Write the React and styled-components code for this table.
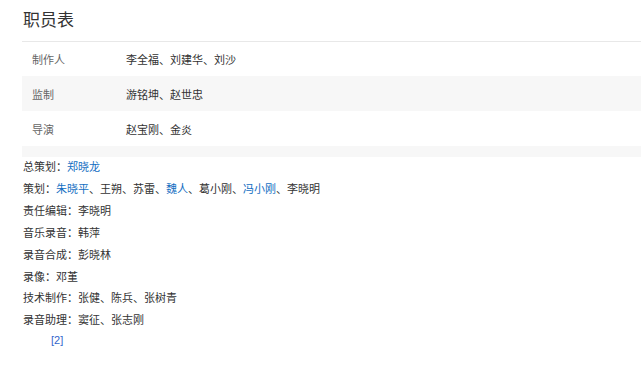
import React from "react";
import styled, { createGlobalStyle } from "styled-components";

const GlobalStyle = createGlobalStyle`
  html, body {
    margin: 0;
    padding: 0;
    background: #fff;
    overflow: hidden;
  }
  body {
    font-family: "Liberation Sans", "Noto Sans CJK SC", sans-serif;
    color: #333;
  }
`;

const Page = styled.div`
  width: 641px;
  height: 369px;
  padding-left: 22px;
  box-sizing: border-box;
`;

const Title = styled.h2`
  margin: 0;
  padding: 9px 0 8px 1px;
  font-size: 17px;
  line-height: 24px;
  font-weight: normal;
  color: #333;
  border-bottom: 1px solid #e8e8e8;
`;

const Table = styled.div`
  display: flex;
  flex-direction: column;
`;

const Row = styled.div`
  display: grid;
  grid-template-columns: 104px 1fr;
  align-items: center;
  height: ${p => p.h || 35}px;
  background: ${p => (p.shaded ? "#f7f7f7" : "#fff")};
  font-size: 11px;
`;

const Label = styled.span`
  padding-left: 10px;
  color: #666;
`;

const Value = styled.span`
  color: #333;
`;

const List = styled.div`
  padding-left: 1px;
  font-size: 11px;
  line-height: 21.9px;
  color: #333;
`;

const Line = styled.div``;

const Link = styled.span`
  color: #136ec2;
`;

const Ref = styled.div`
  padding-left: 29px;
  margin-top: 1px;
  font-size: 11px;
  line-height: 14px;
  color: #3366cc;
`;

const staff = [
  { label: "制作人", value: "李全福、刘建华、刘沙" },
  { label: "监制", value: "游铭坤、赵世忠" },
  { label: "导演", value: "赵宝刚、金炎" }
];

const credits = [
  ["责任编辑", "李晓明"],
  ["音乐录音", "韩萍"],
  ["录音合成", "彭晓林"],
  ["录像", "邓堇"],
  ["技术制作", "张健、陈兵、张树青"],
  ["录音助理", "窦征、张志刚"]
];

export default function App() {
  return (
    <>
      <GlobalStyle />
      <Page>
        <Title>职员表</Title>
        <Table>
          {staff.map((s, i) => (
            <Row key={s.label} shaded={i % 2 === 1} h={i === 0 ? 34 : 35}>
              <Label>{s.label}</Label>
              <Value>{s.value}</Value>
            </Row>
          ))}
          <Row shaded h={11} />
        </Table>
        <List>
          <Line>
            总策划：<Link>郑晓龙</Link>
          </Line>
          <Line>
            策划：<Link>朱晓平</Link>、王朔、苏雷、<Link>魏人</Link>、葛小刚、
            <Link>冯小刚</Link>、李晓明
          </Line>
          {credits.map(([k, v]) => (
            <Line key={k}>
              {k}：{v}
            </Line>
          ))}
        </List>
        <Ref>[2]</Ref>
      </Page>
    </>
  );
}
